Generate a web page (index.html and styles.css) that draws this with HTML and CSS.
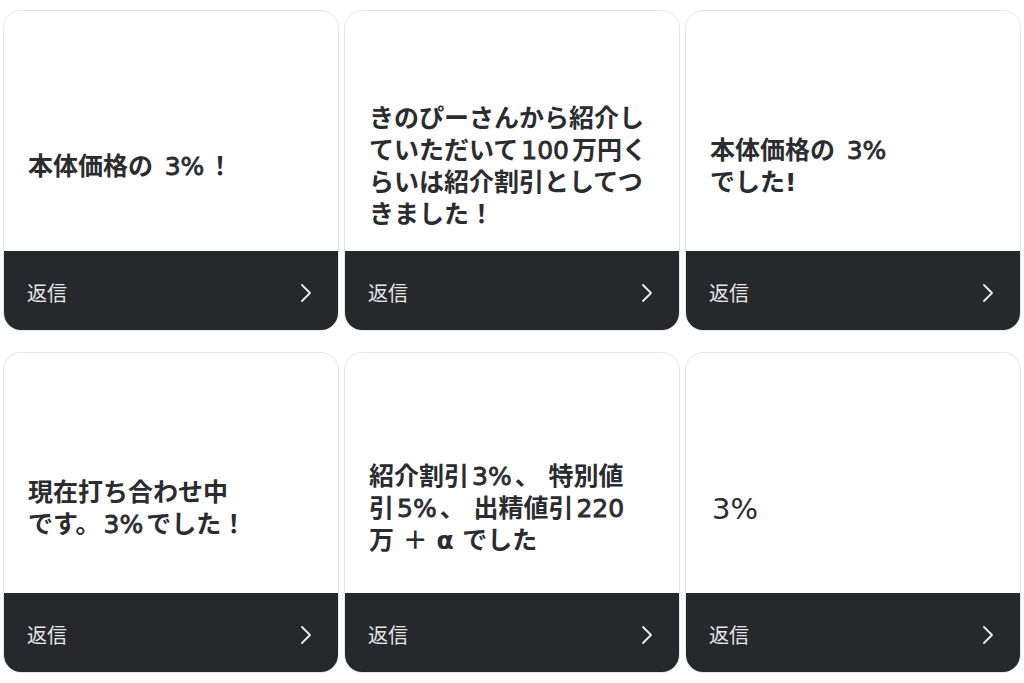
FILE: index.html
```html
<!DOCTYPE html>
<html lang="ja">
<head>
    <meta charset="UTF-8">
    <meta name="viewport" content="width=device-width, initial-scale=1.0">
    <title>返信</title>
    <link rel="stylesheet" href="styles.css">
</head>
<body>
    <div class="grid">
        <div class="card">
            <div class="card-body"><p>本体価格の <span class="num">3%</span>！</p></div>
            <div class="card-foot"><span>返信</span><svg class="chev" viewBox="0 0 12 20"><polyline points="2,2 10,10 2,18"/></svg></div>
        </div>
        <div class="card">
            <div class="card-body"><p>きのぴーさんから紹介し<br>ていただいて<span class="num">100</span>万円く<br>らいは紹介割引としてつ<br>きました！</p></div>
            <div class="card-foot"><span>返信</span><svg class="chev" viewBox="0 0 12 20"><polyline points="2,2 10,10 2,18"/></svg></div>
        </div>
        <div class="card">
            <div class="card-body"><p>本体価格の <span class="num">3%</span><br>でした!</p></div>
            <div class="card-foot"><span>返信</span><svg class="chev" viewBox="0 0 12 20"><polyline points="2,2 10,10 2,18"/></svg></div>
        </div>
        <div class="card">
            <div class="card-body"><p>現在打ち合わせ中<br>です。<span class="num">3%</span>でした！</p></div>
            <div class="card-foot"><span>返信</span><svg class="chev" viewBox="0 0 12 20"><polyline points="2,2 10,10 2,18"/></svg></div>
        </div>
        <div class="card">
            <div class="card-body"><p>紹介割引<span class="num">3%</span>、 特別値<br>引<span class="num">5%</span>、 出精値引<span class="num">220</span><br>万 ＋ α でした</p></div>
            <div class="card-foot"><span>返信</span><svg class="chev" viewBox="0 0 12 20"><polyline points="2,2 10,10 2,18"/></svg></div>
        </div>
        <div class="card">
            <div class="card-body"><p class="plain">3%</p></div>
            <div class="card-foot"><span>返信</span><svg class="chev" viewBox="0 0 12 20"><polyline points="2,2 10,10 2,18"/></svg></div>
        </div>
    </div>
</body>
</html>
```

FILE: styles.css
```css
body {
    margin: 0;
    background: #ffffff;
    font-family: "DejaVu Sans", "Noto Sans CJK JP", sans-serif;
}
.grid {
    display: grid;
    grid-template-columns: repeat(3, 336px);
    grid-auto-rows: 321px;
    column-gap: 5px;
    row-gap: 21px;
    padding: 10px 0 0 3px;
}
.card {
    display: flex;
    flex-direction: column;
    border: 1px solid #e3e6ea;
    border-radius: 18px;
    overflow: hidden;
    background: #fff;
}
.card-body {
    flex: 1;
    display: flex;
    align-items: center;
    padding: 72px 24px 0 24px;
}
.card-body p {
    margin: 0;
    color: #2a2c30;
    font-size: 25px;
    font-weight: 700;
    line-height: 32px;
}
.card-body .num {
    font-weight: 400;
    -webkit-text-stroke: 0.8px #2a2c30;
    margin: 0 3px;
}
.card-body p.plain {
    font-size: 29px;
    font-weight: 400;
    padding-left: 2px;
}
.card-foot {
    height: 79px;
    background: #26282c;
    display: flex;
    align-items: center;
    justify-content: space-between;
    padding: 4px 26px 0 23px;
    box-sizing: border-box;
}
.card-foot span {
    color: #e6e6e6;
    font-size: 20px;
    font-family: "Noto Sans CJK JP", sans-serif;
}
.chev {
    width: 12px;
    height: 20px;
}
.chev polyline {
    fill: none;
    stroke: #f0f0f0;
    stroke-width: 1.8;
    stroke-linecap: round;
    stroke-linejoin: round;
}
```
